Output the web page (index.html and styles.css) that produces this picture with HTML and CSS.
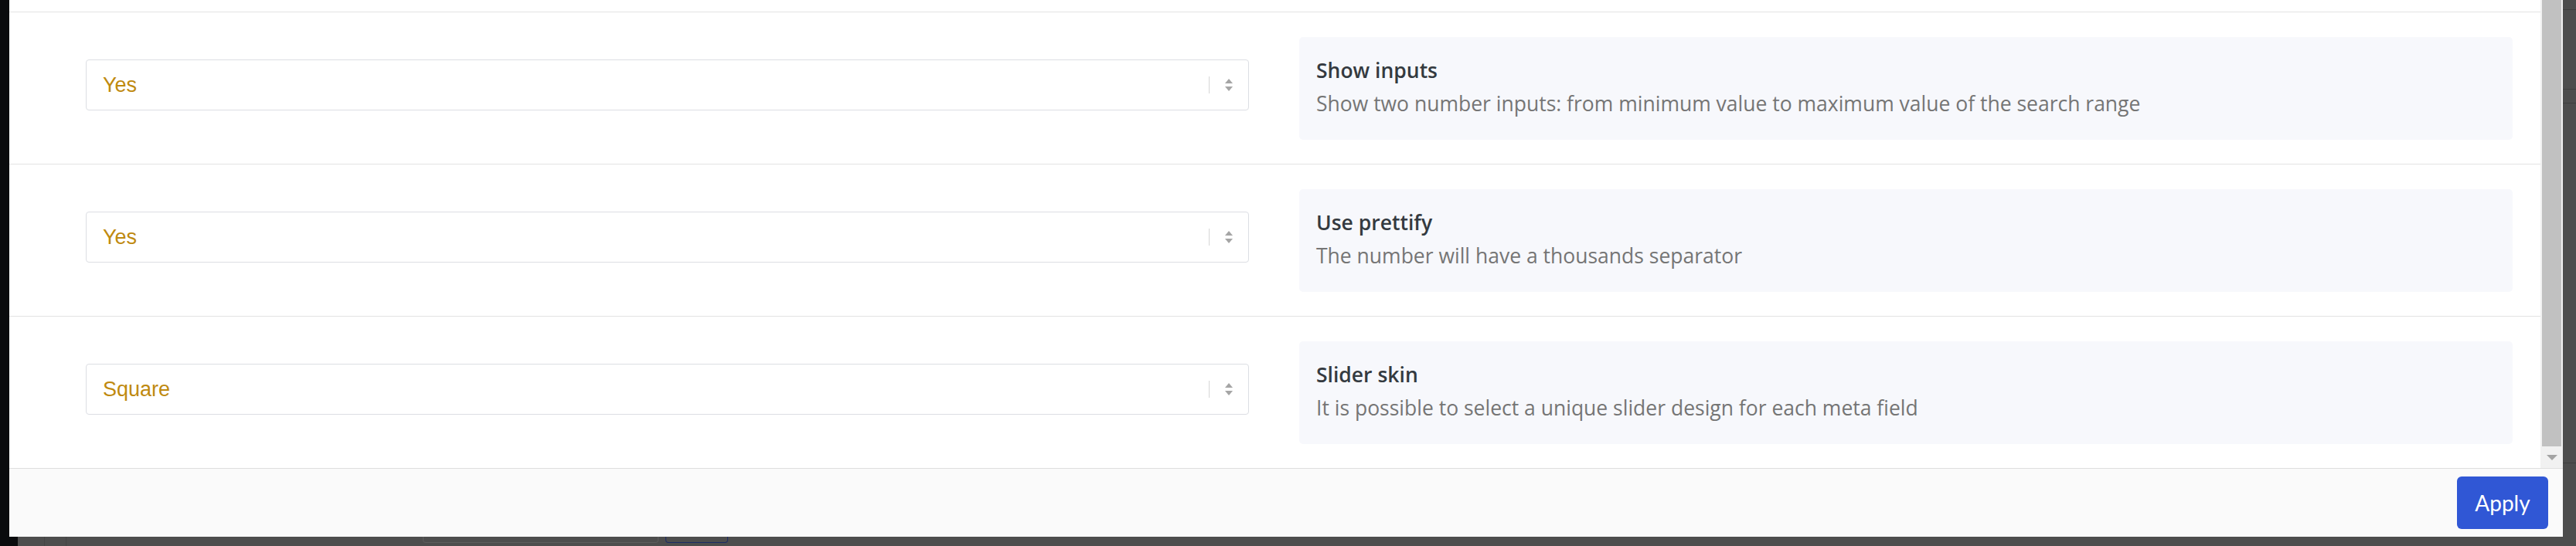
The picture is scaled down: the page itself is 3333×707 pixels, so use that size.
FILE: index.html
```html
<!DOCTYPE html>
<html lang="en">
<head>
<meta charset="utf-8">
<title>Slider settings</title>
<link rel="stylesheet" href="styles.css">
</head>
<body>
<div class="screen">
  <div class="main">
    <div class="backdrop-left"></div>
    <div class="modal">
      <div class="modal-body">
        <div class="rows">
          <div class="row row-partial"></div>
          <div class="row">
            <div class="field">
              <div class="select">
                <span class="select-value">Yes</span>
                <span class="select-sep"></span>
                <span class="select-arrows"><span class="arr-up"></span><span class="arr-down"></span></span>
              </div>
            </div>
            <div class="desc">
              <div class="desc-title">Show inputs</div>
              <div class="desc-text">Show two number inputs: from minimum value to maximum value of the search range</div>
            </div>
          </div>
          <div class="row">
            <div class="field">
              <div class="select">
                <span class="select-value">Yes</span>
                <span class="select-sep"></span>
                <span class="select-arrows"><span class="arr-up"></span><span class="arr-down"></span></span>
              </div>
            </div>
            <div class="desc">
              <div class="desc-title">Use prettify</div>
              <div class="desc-text">The number will have a thousands separator</div>
            </div>
          </div>
          <div class="row">
            <div class="field">
              <div class="select">
                <span class="select-value">Square</span>
                <span class="select-sep"></span>
                <span class="select-arrows"><span class="arr-up"></span><span class="arr-down"></span></span>
              </div>
            </div>
            <div class="desc">
              <div class="desc-title">Slider skin</div>
              <div class="desc-text">It is possible to select a unique slider design for each meta field</div>
            </div>
          </div>
        </div>
        <div class="scrollbar">
          <div class="scroll-thumb"></div>
          <div class="scroll-down"><span class="scroll-tri"></span></div>
        </div>
      </div>
      <div class="modal-footer">
        <button class="btn-apply" type="button">Apply</button>
      </div>
    </div>
    <div class="backdrop-right">
      <div class="br-seg br-a"></div>
      <div class="br-seg br-b"></div>
      <div class="br-seg br-c"></div>
      <div class="br-seg br-d"></div>
    </div>
  </div>
  <div class="bottom">
    <div class="bottom-black"></div>
    <div class="bottom-cell c1"></div>
    <div class="bottom-cell c2"></div>
    <div class="bottom-fill">
      <div class="bg-input"></div>
      <div class="bg-btn"></div>
    </div>
  </div>
</div>
</body>
</html>
```
FILE: styles.css
```css
* { box-sizing: border-box; }
html, body { margin: 0; padding: 0; }
body {
  width: 3333px;
  height: 707px;
  overflow: hidden;
  background: #4d4d4d;
  font-family: "Open Sans", "Noto Sans", sans-serif;
}
.screen { display: flex; flex-direction: column; width: 3333px; height: 707px; }
.main { display: flex; height: 695px; }
.backdrop-left { width: 12px; background: #0a0b0d; }
.modal {
  width: 3304px;
  display: flex;
  flex-direction: column;
  background: #fff;
}
.modal-body { display: flex; height: 606px; }
.rows { flex: 1; display: flex; flex-direction: column; }
.row {
  height: 197px;
  border-top: 1px solid #e3e3e3;
  display: flex;
  align-items: flex-start;
  padding: 32px 36px 0 99px;
  gap: 65px;
}
.row-partial { height: 15px; border-top: none; padding: 0; }
.field { width: 1505px; padding-top: 29px; }
.select {
  height: 66px;
  border: 1px solid #dcdee3;
  border-radius: 4px;
  display: flex;
  align-items: center;
  padding-left: 21px;
  font-family: "Liberation Sans", Arial, sans-serif;
  font-size: 27px;
  color: #bf8a10;
}
.select-value { flex: 1; }
.select-sep { width: 1px; height: 22px; background: #d6d6d6; }
.select-arrows {
  width: 50px;
  display: flex;
  flex-direction: column;
  align-items: center;
  gap: 4px;
}
.arr-up {
  width: 0; height: 0;
  border-left: 5px solid transparent;
  border-right: 5px solid transparent;
  border-bottom: 6px solid #a5a5a5;
}
.arr-down {
  width: 0; height: 0;
  border-left: 5px solid transparent;
  border-right: 5px solid transparent;
  border-top: 6px solid #a5a5a5;
}
.desc {
  width: 1570px;
  height: 133px;
  background: #f7f8fc;
  border-radius: 5px;
  padding: 23px 22px 0 22px;
  font-size: 26.5px;
  line-height: 40px;
}
.desc-title { font-weight: 600; color: #343a40; }
.desc-text { color: #757575; margin-top: 3px; }
.scrollbar {
  width: 29px;
  background: #f1f1f1;
  display: flex;
  flex-direction: column;
  padding: 0 2px;
}
.scroll-thumb { height: 578px; background: #c1c1c1; }
.scroll-down { flex: 1; display: flex; align-items: center; justify-content: center; }
.scroll-tri {
  width: 0; height: 0;
  border-left: 7px solid transparent;
  border-right: 7px solid transparent;
  border-top: 7px solid #a3a3a3;
}
.modal-footer {
  flex: 1;
  background: #fafafa;
  border-top: 1px solid #dedede;
  display: flex;
  align-items: center;
  justify-content: flex-end;
  padding-right: 19px;
}
.btn-apply {
  width: 118px;
  height: 68px;
  background: #3057d5;
  border: none;
  border-radius: 6px;
  color: #fff;
  font-family: Lato, "Noto Sans", sans-serif;
  font-size: 28px;
  padding: 0;
}
.backdrop-right { flex: 1; background: #4d4d4d; display: flex; flex-direction: column; }
.br-seg { border-bottom: 1px solid #3e3e3e; }
.br-a { height: 13px; }
.br-b { height: 103px; }
.br-c { height: 18px; }
.br-d { height: 466px; }
.bottom { display: flex; height: 12px; }
.bottom-black { width: 23px; background: #0a0b0d; }
.bottom-cell { border-right: 1px solid #444; }
.c1 { width: 35px; }
.c2 { width: 28px; }
.bottom-fill { flex: 1; display: flex; padding-left: 461px; gap: 9px; }
.bg-input { width: 305px; height: 8px; border: 1px solid #5c5c5c; border-top: none; border-radius: 0 0 4px 4px; }
.bg-btn { width: 81px; height: 8px; border: 1px solid #1c2b66; border-top: none; border-radius: 0 0 4px 4px; }
```
